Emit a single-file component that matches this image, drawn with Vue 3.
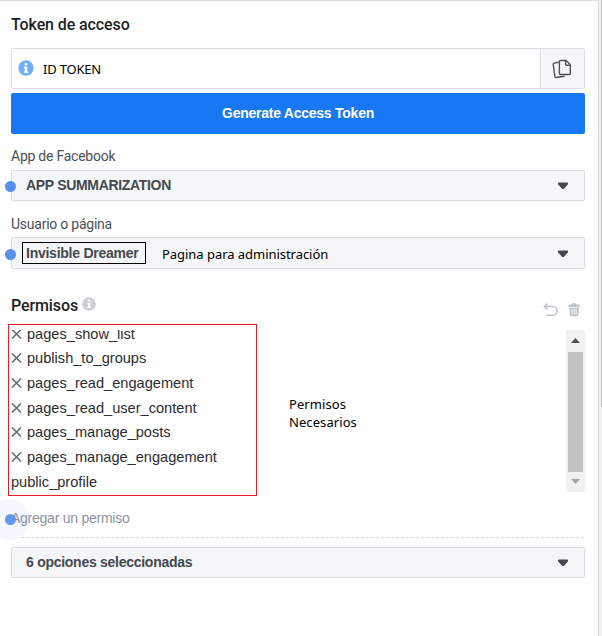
<script setup>
const permissions = [
  'pages_show_list',
  'publish_to_groups',
  'pages_read_engagement',
  'pages_read_user_content',
  'pages_manage_posts',
  'pages_manage_engagement',
]
</script>

<template>
  <div class="page">
    <main class="panel">
      <h2 class="title">Token de acceso</h2>
      <div class="token">
        <svg class="token-info" viewBox="0 0 16 16" width="16" height="16">
          <circle cx="8" cy="8" r="7.7" fill="#6fb1ff" />
          <path d="M6.700 3h2.500v2.200H6.700zM6 6.500h3.200v5h.9V13H5.900v-1.500h.8V8H6z" fill="#fff" />
        </svg>
        <span class="note token-text">ID TOKEN</span>
        <button class="copy" aria-label="Copiar">
          <svg viewBox="0 0 20 20" width="20" height="20" fill="none" stroke="#4b4f56" stroke-width="1.4" stroke-linejoin="round">
            <path d="M6.500 3.300 2 4.100q-.9.2-.8 1.100l1.700 12.500q.2.900 1.100.8l8.500-1.200" />
            <path d="M8.500 1.500h5.700l4.100 4.200v8.800q0 1-1 1H8.400q-1 0-1-1v-12q0-1 1.100-1z" fill="#f5f6f7" />
            <path d="M13.600 1.700v3.500q0 1 1 1h3.500" />
          </svg>
        </button>
      </div>
      <button class="generate"><span>Generate Access Token</span></button>

      <div class="label app-label">App de Facebook</div>
      <div class="select">
        <i class="dot"></i>
        <span class="value app-value">APP SUMMARIZATION</span>
        <svg class="caret" viewBox="0 0 12 8" width="12" height="8"><path d="M1.500.5h9q1.200.8.3 1.900L7 6.700q-1 .8-2 0L1.200 2.400Q.3 1.300 1.500.5z" /></svg>
      </div>

      <div class="label user-label">Usuario o página</div>
      <div class="select user">
        <i class="dot"></i>
        <span class="value boxed">Invisible Dreamer</span>
        <span class="note user-note">Pagina para administración</span>
        <svg class="caret" viewBox="0 0 12 8" width="12" height="8"><path d="M1.500.5h9q1.200.8.3 1.900L7 6.700q-1 .8-2 0L1.200 2.400Q.3 1.300 1.500.5z" /></svg>
      </div>

      <header class="perm-head">
        <h2 class="title">Permisos</h2>
        <svg class="perm-info" viewBox="0 0 14 14" width="14" height="14">
          <circle cx="7" cy="7" r="6.800" fill="#ccd0d5" />
          <path d="M6 2.800h2.200v1.800H6zM5.300 5.700h2.900v4h.8V11H5.100V9.700H6V7h-.7z" fill="#fff" />
        </svg>
        <svg class="undo" viewBox="0 0 15 14" width="15" height="14" fill="none" stroke="#bec3c9" stroke-width="1.500">
          <path d="M4.300.6 1.300 3.500l3 2.900M1.500 3.500h8.200a4.400 4.400 0 0 1 0 8.800H3.500" />
        </svg>
        <svg class="trash" viewBox="0 0 12 14" width="12" height="14">
          <path d="M4.500.3h3l1 1.300H11q.7 0 .7.700V4H.5V2.300q0-.7.700-.7h2.300zM1.300 4.700h9.600l-.5 7.500q-.1 1-1.100 1H3q-1 0-1.100-1z" fill="#bec3c9" />
          <path d="M4 6v5.500M6.100 6v5.500M8.200 6v5.500" stroke="#fff" stroke-width=".9" />
        </svg>
      </header>

      <section class="perm-body">
        <div class="list">
          <div v-for="name in permissions" :key="name" class="item">
            <svg viewBox="0 0 11 10" width="11" height="10" fill="none" stroke="#606770" stroke-width="1.500"><path d="M1 .5 10 9.500M10 .5 1 9.500" /></svg>
            <span>{{ name }}</span>
          </div>
          <div class="item"><span>public_profile</span></div>
        </div>
        <p class="note perm-note">Permisos<br />Necesarios</p>
        <div class="scrollbar">
          <svg viewBox="0 0 9 5" width="9" height="5"><path d="M0 5 4.500 0 9 5z" fill="#505050" /></svg>
          <div class="thumb"></div>
          <svg viewBox="0 0 9 5" width="9" height="5"><path d="M0 0 4.500 5 9 0z" fill="#a3a3a3" /></svg>
        </div>
        <div class="highlight"></div>
      </section>

      <div class="add">
        <i class="halo"></i>
        <span>Agregar un permiso</span>
        <i class="dot"></i>
      </div>
      <svg class="divider" width="574" height="1"><path d="M0 .5h574" stroke="#d5d7db" stroke-dasharray="3 2" /></svg>
      <div class="select">
        <span class="value options-value">6 opciones seleccionadas</span>
        <svg class="caret" viewBox="0 0 12 8" width="12" height="8"><path d="M1.500.5h9q1.200.8.3 1.900L7 6.700q-1 .8-2 0L1.200 2.400Q.3 1.300 1.500.5z" /></svg>
      </div>
    </main>
    <aside class="page-scroll"><div class="page-thumb"></div></aside>
  </div>
</template>

<style>
body { background: #fff; overflow: hidden; }
</style>

<style scoped>
* { box-sizing: border-box; }
.page { display: flex; width: 602px; height: 636px; font-family: "Liberation Sans", Arial, sans-serif; font-size: 14px; color: #1c1e21; }
.panel { width: 599px; height: 636px; padding: 0 13px 0 11px; border-top: 1px solid #dadde1; border-right: 1px solid #dadde1; display: flex; flex-direction: column; }
.page-scroll { width: 3px; background: #f1f1f1; display: flex; justify-content: flex-end; }
.page-thumb { width: 1px; height: 407px; background: #c1c1c1; }
.title { margin: 0; font: 500 16px/20px Roboto, sans-serif; letter-spacing: -.1px; color: #1c1e21; }
.panel > .title { margin-top: 14px; }
.note { font-family: "Noto Sans", "Open Sans", sans-serif; font-size: 13px; line-height: 18px; color: #000; white-space: nowrap; }
.token { margin-top: 13px; height: 41px; border: 1px solid #dadde1; border-radius: 2px; display: flex; align-items: center; padding-left: 6px; }
.token-info { margin-top: -2px; }
.token-text { margin-left: 9px; letter-spacing: -.2px; }
.copy { margin-left: auto; width: 44px; height: 39px; padding: 0 2px 0 0; border: 0; border-left: 1px solid #dadde1; background: #f5f6f7; display: flex; align-items: center; justify-content: center; }
.generate { margin-top: 4px; height: 41px; flex: none; padding: 0 0 2px; border: 0; border-radius: 2px; background: #1877f2; color: #fff; font: bold 14px/20px "Liberation Sans", Arial, sans-serif; letter-spacing: -.25px; }
.label { font: 400 14px/20px Roboto, sans-serif; letter-spacing: -.24px; color: #4b4f56; }
.app-label { margin-top: 12px; margin-bottom: 4px; }
.user-label { margin-top: 13px; margin-bottom: 3px; }
.select { position: relative; height: 31px; flex: none; border: 1px solid #dadde1; border-radius: 2px; background: #f5f6f7; display: flex; align-items: center; padding: 0 15px 0 14px; }
.user { height: 32px; padding-left: 10px; }
.value { font-weight: bold; color: #444950; line-height: 18px; white-space: nowrap; }
.app-value { letter-spacing: -.32px; padding-bottom: 2px; }
.options-value { letter-spacing: -.27px; padding-bottom: 2px; }
.boxed { width: 124px; height: 22px; border: 1px solid #000; padding-left: 3px; line-height: 21px; letter-spacing: -.25px; }
.user-note { margin-left: 16px; padding-top: 2px; letter-spacing: -.04px; }
.caret { margin-left: auto; fill: #444950; }
.user .caret { margin-top: 1px; }
.dot { position: absolute; left: -7px; top: 10px; width: 11px; height: 11px; border-radius: 50%; background: #5890ea; }
.user .dot { top: 11px; }
.perm-head { height: 20px; margin-top: 27px; display: flex; }
.perm-info { margin: 1px 0 0 4px; }
.undo { margin: 7px 0 0 auto; }
.trash { margin: 7px 5px 0 10px; }
.perm-body { position: relative; margin-top: 14px; height: 162px; flex: none; display: flex; }
.list { width: 278px; height: 162px; overflow: hidden; display: flex; flex-direction: column; justify-content: flex-end; }
.item { position: relative; top: 2px; height: 24.700px; flex: none; display: flex; align-items: center; gap: 5px; font-size: 14.600px; line-height: 20px; color: #2b2d31; }
.perm-note { margin: 65px 0 0; letter-spacing: .08px; }
.scrollbar { margin-left: auto; width: 19px; background: #f1f1f1; display: flex; flex-direction: column; align-items: center; padding-top: 8px; }
.thumb { width: 15px; height: 120px; margin: 9px 0 7px; background: #c1c1c1; }
.highlight { position: absolute; left: -3px; top: -6px; width: 249px; height: 172px; border: 1px solid #ed1c24; }
.add { position: relative; height: 20px; margin-top: 16px; line-height: 20px; letter-spacing: -.25px; color: #8d949e; }
.add span { position: relative; }
.add .dot { left: -6px; top: 6px; opacity: .93; }
.halo { position: absolute; left: -22px; top: -9px; width: 41px; height: 41px; border-radius: 50%; background: #f7f8ff; }
.divider { margin: 9px 0; flex: none; }
</style>
